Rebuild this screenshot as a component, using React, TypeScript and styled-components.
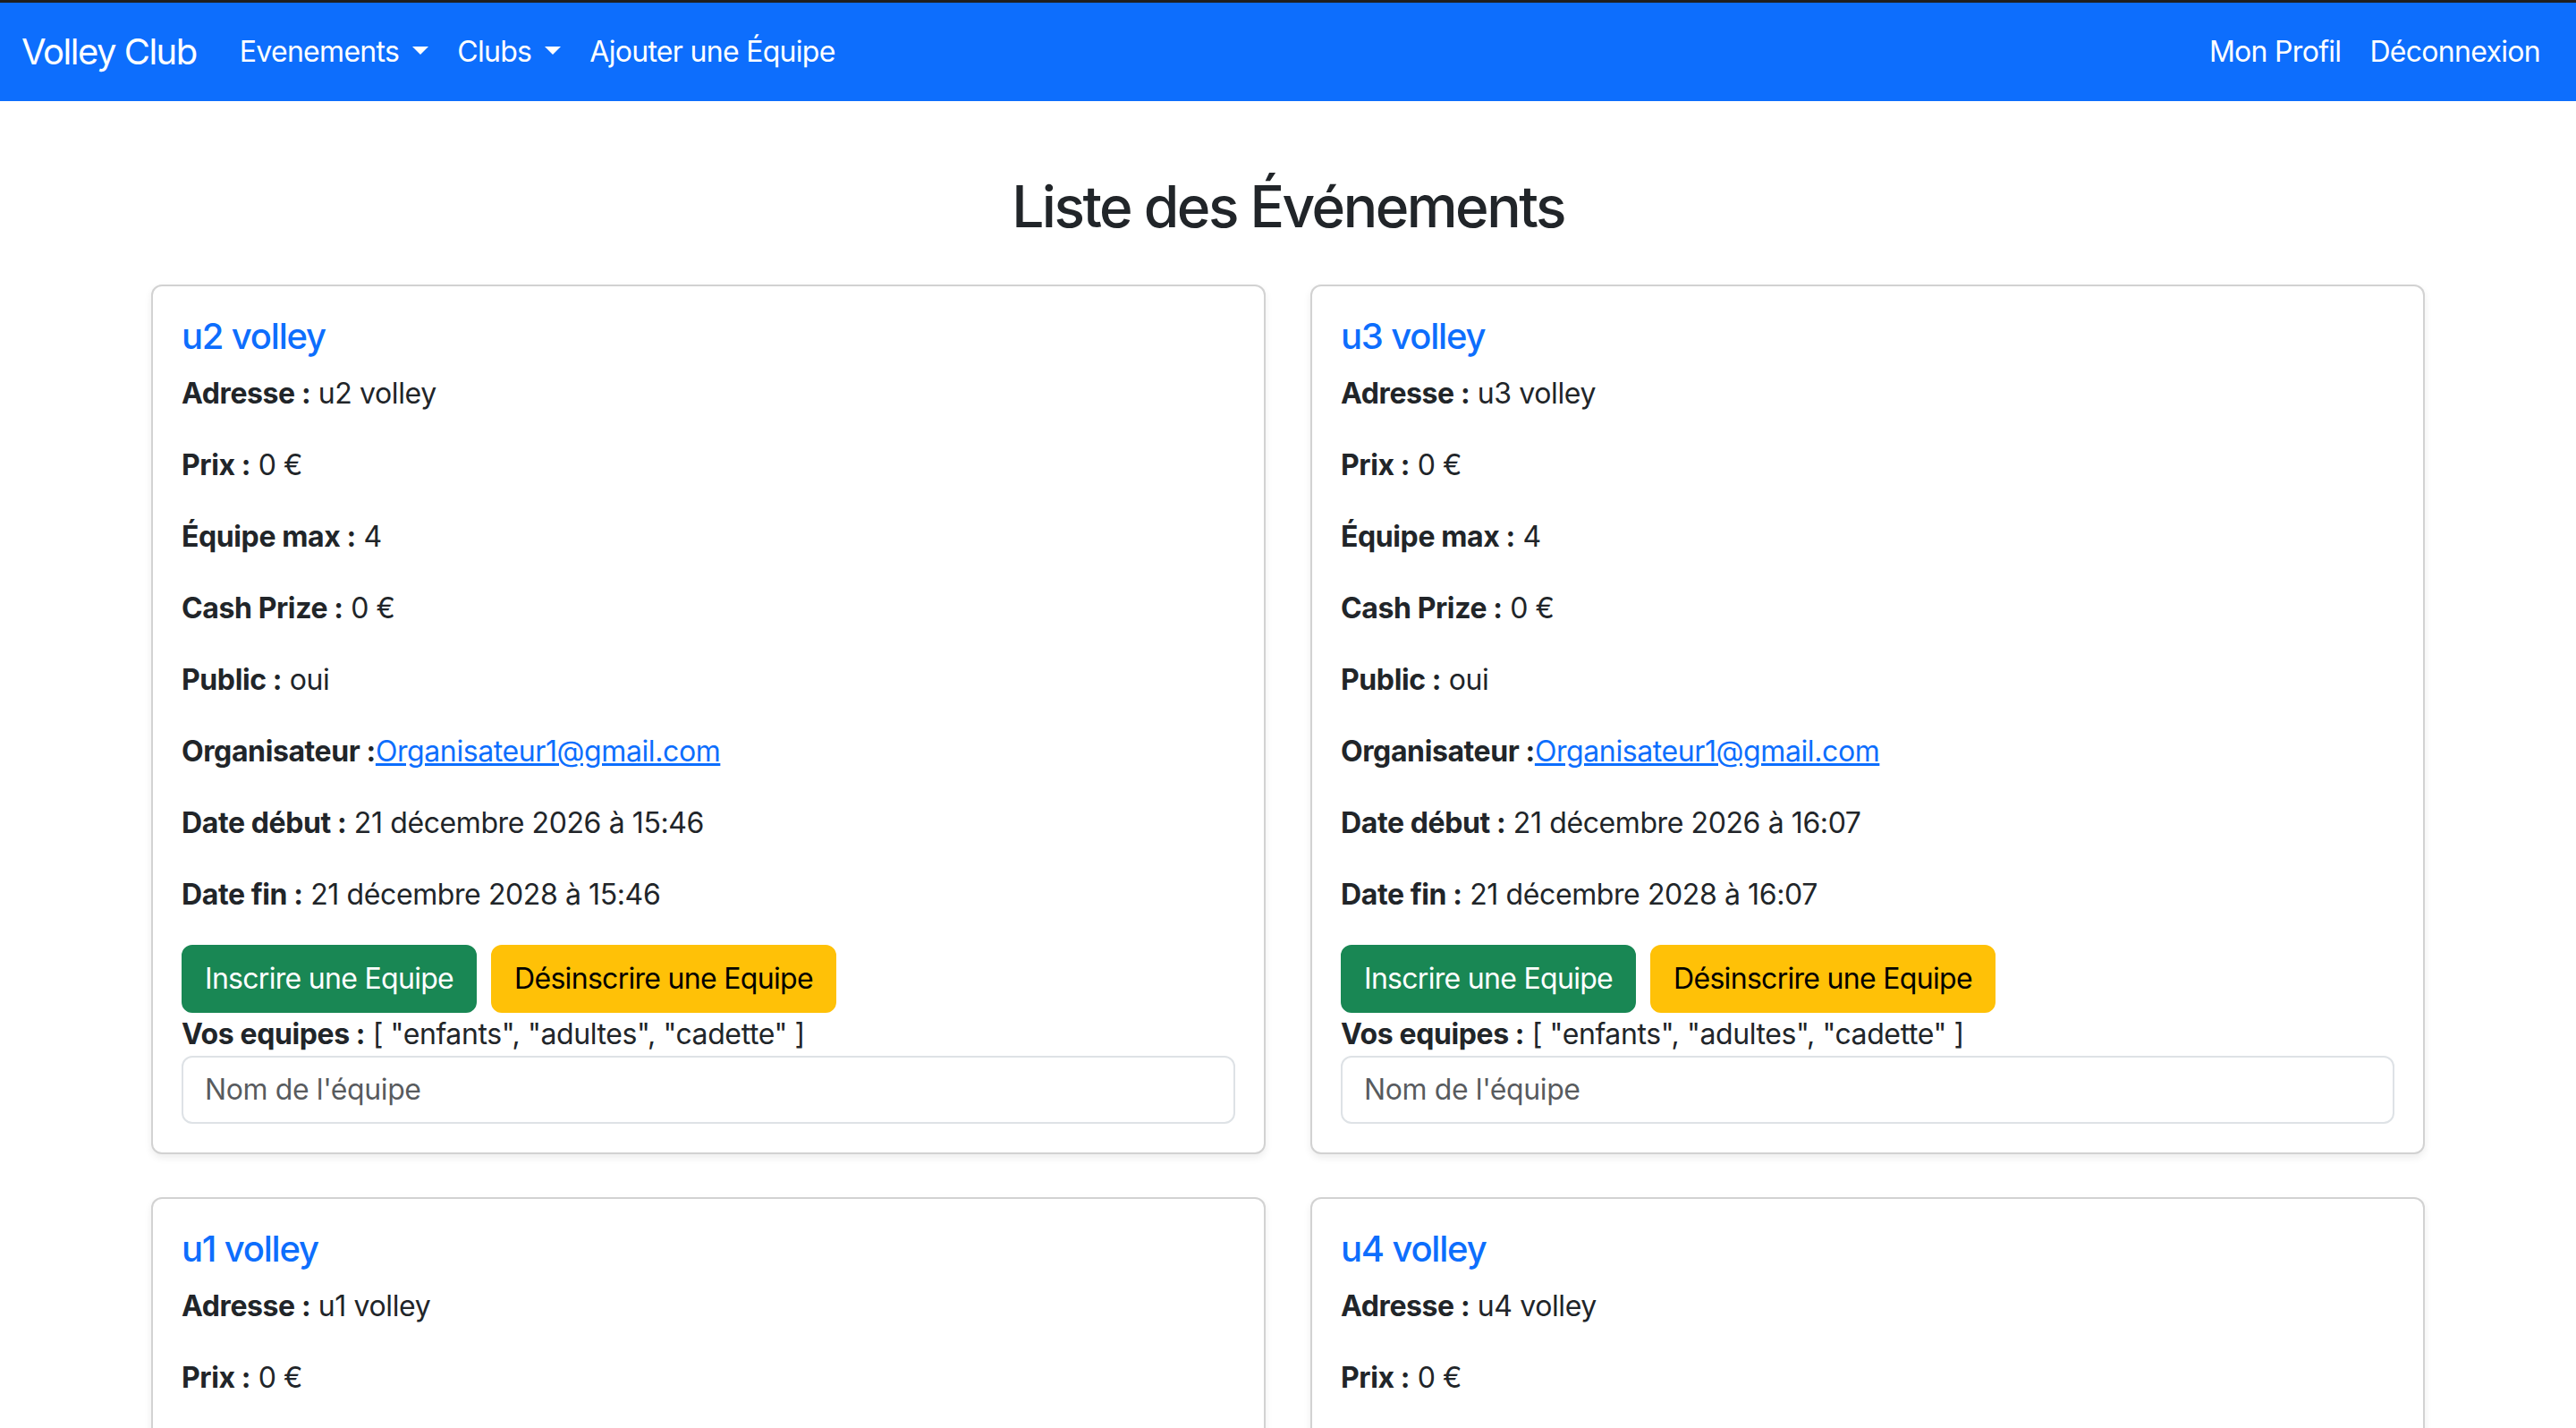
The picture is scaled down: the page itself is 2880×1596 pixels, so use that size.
import React from "react";
import styled, { createGlobalStyle } from "styled-components";

const GlobalStyle = createGlobalStyle`
  html, body { margin: 0; padding: 0; background: #fff; }
  body {
    font-family: "Inter", "Liberation Sans", "Noto Sans", sans-serif;
    font-size: 32px;
    line-height: 1.5;
    color: #212529;
  }
  * { box-sizing: border-box; }
`;

const TopStrip = styled.div`
  height: 3px;
  background: #1f1f1f;
`;

const NavBar = styled.nav`
  height: 110px;
  background: #0d6efd;
  display: flex;
  align-items: center;
  justify-content: space-between;
  padding: 0 24px;
`;

const NavGroup = styled.div`
  display: flex;
  align-items: center;
`;

const Brand = styled.a`
  font-size: 40px;
  line-height: 60px;
  color: #fff;
  text-decoration: none;
  margin-right: 32px;
  letter-spacing: -1.5px;
`;

const NavLink = styled.a<{ $caret?: boolean }>`
  font-size: 32px;
  line-height: 48px;
  color: #fff;
  text-decoration: none;
  padding: 0 16px;
  letter-spacing: -0.7px;
  white-space: nowrap;
  ${(p) =>
    p.$caret
      ? `
    &::after {
      content: "";
      display: inline-block;
      margin-left: 15px;
      vertical-align: 8px;
      border-top: 9.6px solid #fff;
      border-left: 9.6px solid transparent;
      border-right: 9.6px solid transparent;
      border-bottom: 0;
    }
  `
      : ""}
`;

const Main = styled.main`
  max-width: 2542px;
  margin: 0 auto;
  padding-top: 80px;
`;

const PageTitle = styled.h2`
  margin: 0 0 48px;
  font-size: 64px;
  line-height: 1.2;
  font-weight: 500;
  text-align: center;
  letter-spacing: -2.5px;
`;

const Grid = styled.div`
  display: grid;
  grid-template-columns: 1fr 1fr;
  column-gap: 50px;
  row-gap: 48px;
  padding-bottom: 48px;
`;

const Card = styled.div`
  border: 2px solid rgba(0, 0, 0, 0.175);
  border-radius: 12px;
  box-shadow: 0 4px 8px rgba(0, 0, 0, 0.075);
  padding: 32px;
  background: #fff;
`;

const CardTitle = styled.h5`
  margin: 0 0 16px;
  font-size: 40px;
  line-height: 1.2;
  font-weight: 500;
  color: #0d6efd;
  letter-spacing: -1.2px;
`;

const Field = styled.p`
  margin: 0 0 32px;
  font-size: 32px;
  line-height: 48px;
  letter-spacing: -0.4px;
`;

const Label = styled.strong`
  font-weight: 700;
`;

const MailLink = styled.a`
  color: #0d6efd;
  text-decoration: underline;
`;

const ButtonRow = styled.div`
  display: flex;
  gap: 16px;
`;

const Button = styled.button<{ $variant: "success" | "warning" }>`
  font-family: inherit;
  font-size: 32px;
  line-height: 48px;
  padding: 12px 24px;
  border-radius: 12px;
  letter-spacing: -0.7px;
  cursor: pointer;
  border: 2px solid ${(p) => (p.$variant === "success" ? "#198754" : "#ffc107")};
  background: ${(p) => (p.$variant === "success" ? "#198754" : "#ffc107")};
  color: ${(p) => (p.$variant === "success" ? "#fff" : "#000")};
`;

const Teams = styled.div`
  font-size: 32px;
  line-height: 48px;
  letter-spacing: -0.4px;
`;

const TeamInput = styled.input`
  display: block;
  width: 100%;
  font-family: inherit;
  font-size: 32px;
  line-height: 48px;
  padding: 12px 24px;
  border: 2px solid #dee2e6;
  border-radius: 12px;
  color: #212529;
  letter-spacing: -0.4px;
  outline: none;
  &::placeholder {
    color: rgba(33, 37, 41, 0.75);
  }
`;

type EventData = {
  name: string;
  start: string;
  end: string;
};

const events: EventData[] = [
  { name: "u2 volley", start: "21 décembre 2026 à 15:46", end: "21 décembre 2028 à 15:46" },
  { name: "u3 volley", start: "21 décembre 2026 à 16:07", end: "21 décembre 2028 à 16:07" },
  { name: "u1 volley", start: "21 décembre 2026 à 15:40", end: "21 décembre 2028 à 15:40" },
  { name: "u4 volley", start: "21 décembre 2026 à 16:10", end: "21 décembre 2028 à 16:10" },
];

function EventCard({ ev }: { ev: EventData }) {
  return (
    <Card>
      <CardTitle>{ev.name}</CardTitle>
      <Field>
        <Label>Adresse :</Label> {ev.name}
      </Field>
      <Field>
        <Label>Prix :</Label> 0 €
      </Field>
      <Field>
        <Label>Équipe max :</Label> 4
      </Field>
      <Field>
        <Label>Cash Prize :</Label> 0 €
      </Field>
      <Field>
        <Label>Public :</Label> oui
      </Field>
      <Field>
        <Label>Organisateur :</Label>
        <MailLink href="#">Organisateur1@gmail.com</MailLink>
      </Field>
      <Field>
        <Label>Date début :</Label> {ev.start}
      </Field>
      <Field>
        <Label>Date fin :</Label> {ev.end}
      </Field>
      <ButtonRow>
        <Button $variant="success">Inscrire une Equipe</Button>
        <Button $variant="warning">Désinscrire une Equipe</Button>
      </ButtonRow>
      <Teams>
        <Label>Vos equipes :</Label> [ "enfants", "adultes", "cadette" ]
      </Teams>
      <TeamInput placeholder="Nom de l'équipe" />
    </Card>
  );
}

export default function App() {
  return (
    <>
      <GlobalStyle />
      <TopStrip />
      <NavBar>
        <NavGroup>
          <Brand href="#">Volley Club</Brand>
          <NavLink href="#" $caret>Evenements</NavLink>
          <NavLink href="#" $caret>Clubs</NavLink>
          <NavLink href="#">Ajouter une Équipe</NavLink>
        </NavGroup>
        <NavGroup>
          <NavLink href="#">Mon Profil</NavLink>
          <NavLink href="#">Déconnexion</NavLink>
        </NavGroup>
      </NavBar>
      <Main>
        <PageTitle>Liste des Événements</PageTitle>
        <Grid>
          {events.map((ev) => (
            <EventCard key={ev.name} ev={ev} />
          ))}
        </Grid>
      </Main>
    </>
  );
}
